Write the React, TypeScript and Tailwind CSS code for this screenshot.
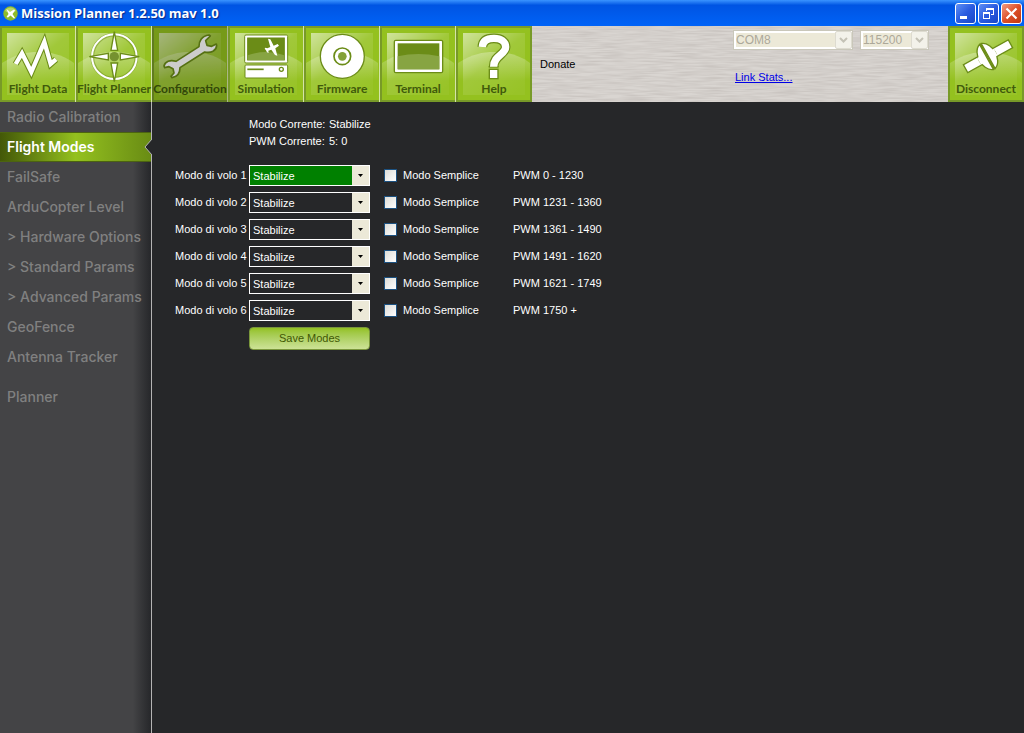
import { useState } from 'react'
import type { ReactNode } from 'react'

const OUTLINE = '#6b8c17'

function FlightDataIcon() {
  const points = '47,192 66,160 94,216 133,126 152,192 168,178'
  return (
    <g transform="translate(0 -26) scale(0.3333)" fill="none" strokeMiterlimit="8">
      <polyline points={points} stroke={OUTLINE} strokeWidth="19" />
      <polyline points={points} stroke="#fff" strokeWidth="13" />
    </g>
  )
}

function FlightPlannerIcon() {
  return (
    <g transform="translate(-76 -26) scale(0.3333)">
      <circle cx="343" cy="170" r="66" fill="none" stroke={OUTLINE} strokeWidth="11" opacity="0.5" />
      <circle cx="343" cy="170" r="67" fill="none" stroke="#fff" strokeWidth="6" />
      <g fill="#fff" stroke={OUTLINE} strokeWidth="4">
        <path d="M343 95l10 56h-20z" />
        <path d="M343 245l10-56h-20z" />
        <path d="M268 170l57-10v20z" />
        <path d="M418 170l-57-10v20z" />
      </g>
      <circle cx="343" cy="170" r="14" fill="#75912f" />
    </g>
  )
}

function ConfigurationIcon() {
  return (
    <g transform="translate(-2 -2) scale(0.3333)">
      <path
        d="M147 68C146 52 155 36 177 33L181 36L167 50L171 64L185 67L199 60L200 65C199 80 184 88 164 84L90 131C90 147 82 158 66 161L63 157L72 147L69 134L57 128L44 131L42 126C45 113 60 106 78 112Z"
        fill="#fff"
        stroke={OUTLINE}
        strokeWidth="5"
        strokeLinejoin="round"
      />
    </g>
  )
}

function SimulationIcon() {
  return (
    <g transform="translate(0 -2) scale(0.3333)" stroke={OUTLINE} strokeWidth="3">
      <rect x="50" y="33" width="129" height="84" rx="4" fill="#fff" />
      <rect x="59" y="42" width="110" height="66" fill="#6b8c17" />
      <path d="M59 94q55-20 110 0v14h-110z" fill="#87a442" stroke="none" />
      <path
        d="M120 44L127 46L137 65L149 60L153 65L142 73L148 95L141 93L130 77L121 80L122 87L117 85L114 79L110 74L112 71L118 73L127 69Z"
        fill="#fff"
        stroke="none"
      />
      <rect x="51" y="123" width="128" height="39" rx="3" fill="#fff" />
      <path d="M58 136h49" strokeWidth="5" />
      <circle cx="160" cy="136" r="6" fill="#fff" strokeWidth="4" />
    </g>
  )
}

function FirmwareIcon() {
  return (
    <g transform="translate(-76 -2) scale(0.3333)" stroke={OUTLINE} strokeWidth="4">
      <circle cx="343" cy="97" r="66" fill="#fff" />
      <circle cx="343" cy="97" r="25" fill="#fff" strokeWidth="5" />
      <circle cx="343" cy="97" r="13" fill="#83a137" stroke="none" />
    </g>
  )
}

function TerminalIcon() {
  return (
    <g transform="translate(0 -2) scale(0.3333)">
      <rect x="43" y="49" width="145" height="97" rx="4" fill="#fff" stroke={OUTLINE} strokeWidth="4" />
      <rect x="53" y="58" width="125" height="78" fill="#6b8c17" />
      <path d="M53 97q62-14 125 0v39h-125z" fill="#87a442" />
    </g>
  )
}

function HelpIcon() {
  const hook = 'M307 69C308 50 322 43 342 43C363 43 377 53 377 69C377 92 341 94 341 128'
  return (
    <g transform="translate(-76 -2) scale(0.3333)" fill="none">
      <path d={hook} stroke={OUTLINE} strokeWidth="29" />
      <rect x="326" y="134" width="30" height="32" fill={OUTLINE} />
      <path d="M326 126h30v5h-30z" fill={OUTLINE} />
      <path d={hook} stroke="#fff" strokeWidth="22" />
      <rect x="330" y="138" width="22" height="24" fill="#fff" />
    </g>
  )
}

function DisconnectIcon() {
  return (
    <g transform="translate(-228 -26) scale(0.3333)">
      <g transform="rotate(-29 803 169)" fill="#fff" stroke={OUTLINE} strokeWidth="4">
        <rect x="727" y="156" width="154" height="27" />
        <path d="M799 126c-17 6-24 27-24 43s7 37 24 43z" />
        <path d="M805 126c17 6 24 27 24 43s-7 37-24 43z" />
        <path d="M777 158v23M827 158v23" stroke="#fff" strokeWidth="7" />
        <path d="M802 125v88" strokeWidth="4" />
      </g>
    </g>
  )
}

type TileProps = {
  label: string
  icon: ReactNode
  active?: boolean
  last?: boolean
}

function ToolbarTile({ label, icon, active, last }: TileProps) {
  return (
    <button
      type="button"
      className="relative flex h-[76px] w-[76px] shrink-0 items-end justify-center overflow-hidden pb-[5px] font-['Lato',sans-serif] text-xs font-bold whitespace-nowrap text-[#405a0b]"
    >
      <svg viewBox="0 0 76 76" className="absolute inset-0 h-full w-full" aria-hidden="true">
        <rect width="76" height="76" fill="#789a28" />
        <rect x="2" y="2" width={last ? 72 : 73} height="72" fill="#94c11f" />
        <rect x="7" y="7" width="62" height="62" fill="url(#tile-shine)" />
        <path d="M2 37C16 28 27 26 38 26s24 2 36 11v37H2z" fill="url(#tile-hill)" />
        {!last && <rect x="75" width="1" height="76" fill="#d5e4a8" />}
        {icon}
      </svg>
      <span className="relative">{label}</span>
      {active && <span className="absolute inset-0 bg-black/20" />}
    </button>
  )
}

function TileGradients() {
  return (
    <svg className="absolute h-0 w-0" aria-hidden="true">
      <defs>
        <linearGradient id="tile-shine" x1="0" y1="0" x2="0.8" y2="1">
          <stop offset="0" stopColor="#fff" stopOpacity="0.56" />
          <stop offset="0.5" stopColor="#fff" stopOpacity="0.12" />
          <stop offset="1" stopColor="#fff" stopOpacity="0.04" />
        </linearGradient>
        <linearGradient id="tile-hill" x1="0" y1="0" x2="0" y2="1">
          <stop offset="0" stopColor="#fff" stopOpacity="0.3" />
          <stop offset="0.6" stopColor="#fff" stopOpacity="0" />
        </linearGradient>
      </defs>
    </svg>
  )
}

const tiles = [
  { label: 'Flight Data', icon: <FlightDataIcon /> },
  { label: 'Flight Planner', icon: <FlightPlannerIcon /> },
  { label: 'Configuration', icon: <ConfigurationIcon />, active: true },
  { label: 'Simulation', icon: <SimulationIcon /> },
  { label: 'Firmware', icon: <FirmwareIcon /> },
  { label: 'Terminal', icon: <TerminalIcon /> },
  { label: 'Help', icon: <HelpIcon />, last: true },
]

const windowButton = 'flex h-[21px] w-[21px] items-center justify-center rounded-[3px] border border-white'

function TitleBar() {
  return (
    <header className="flex h-[26px] items-center bg-linear-to-b from-[#3a93ff] via-[#0054e3] via-20% to-[#0063f7] pr-[2px] pl-[3px]">
      <svg width="15" height="15" viewBox="0 0 15 15" aria-hidden="true">
        <circle cx="7.5" cy="7.5" r="7.2" fill="#8dbb2a" />
        <path d="M2 5a6 6 0 0 1 11 0L7.500 8z" fill="#b7d56c" />
        <path d="M3.500 3l3.500 3 4-2.500 1 1-2.500 3.500 2.500 4-1 .5-3.500-3-2.500 2-1.500-.5 2-3z" fill="#fff" />
      </svg>
      <h1 className="ml-[3px] font-['Open_Sans',sans-serif] text-[13px] leading-5 font-bold text-white [text-shadow:1px_1px_1px_#0a2a8a]">
        Mission Planner 1.2.50 mav 1.0
      </h1>
      <div className="ml-auto flex gap-[2px]">
        <button
          type="button"
          aria-label="Minimize"
          className={`${windowButton} bg-linear-to-br from-[#5f8ff5] via-[#2a5be0] to-[#1846c8]`}
        >
          <svg width="19" height="19" aria-hidden="true">
            <rect x="4" y="12" width="7" height="3" fill="#fff" />
          </svg>
        </button>
        <button
          type="button"
          aria-label="Restore"
          className={`${windowButton} bg-linear-to-br from-[#5f8ff5] via-[#2a5be0] to-[#1846c8]`}
        >
          <svg width="19" height="19" aria-hidden="true" fill="none" stroke="#fff" shapeRendering="crispEdges">
            <path d="M7.500 7V4.500h7v6H12M7 5.500h8" />
            <path d="M4.500 8.500h6v6h-6zM4 9.500h7" />
          </svg>
        </button>
        <button
          type="button"
          aria-label="Close"
          className={`${windowButton} bg-linear-to-br from-[#f09a80] via-[#dd4f28] to-[#c03a10]`}
        >
          <svg width="19" height="19" aria-hidden="true">
            <path d="M4.500 4.500l10 10M14.500 4.500l-10 10" stroke="#fff" strokeWidth="2.200" />
          </svg>
        </button>
      </div>
    </header>
  )
}

function DisabledSelect({ label, value, width }: { label: string; value: string; width: string }) {
  return (
    <div className={`relative h-5 border border-[#c9c7ba] bg-white p-px ${width}`}>
      <select
        disabled
        aria-label={label}
        className="block h-full w-full appearance-none border border-white bg-[#ece9d8] text-xs leading-3 text-[#aca899] opacity-100"
      >
        <option>{value}</option>
      </select>
      <span className="pointer-events-none absolute inset-y-0 right-0 flex w-[17px] items-center justify-center rounded-xs border border-[#dddbd0] bg-[#f3f2ea]">
        <svg width="9" height="7" aria-hidden="true">
          <path d="M1 1l3.500 3.500L8 1" fill="none" stroke="#c4c2b6" strokeWidth="2" />
        </svg>
      </span>
    </div>
  )
}

function Toolbar() {
  return (
    <div className="relative flex h-[76px] bg-[#d9d5d1]">
      <svg className="absolute inset-0 h-full w-full" aria-hidden="true">
        <filter id="brushed" colorInterpolationFilters="sRGB">
          <feTurbulence type="fractalNoise" baseFrequency="0.04 0.6" numOctaves="2" />
          <feColorMatrix values="0 0 0 0 0.5  0 0 0 0 0.46  0 0 0 0 0.44  0.35 0 0 0 -0.11" />
        </filter>
        <rect width="100%" height="100%" filter="url(#brushed)" />
      </svg>
      <nav className="relative flex">
        {tiles.map((tile) => (
          <ToolbarTile key={tile.label} {...tile} />
        ))}
      </nav>
      <a href="#donate" className="relative mt-[30px] ml-2 self-start leading-4 text-black">
        Donate
      </a>
      <div className="relative mr-[19px] ml-auto">
        <div className="mt-1 flex gap-[7px]">
          <DisabledSelect label="Port" value="COM8" width="w-[120px]" />
          <DisabledSelect label="Baud rate" value="115200" width="w-[69px]" />
        </div>
        <a href="#link-stats" className="mt-[19px] ml-[2px] inline-block leading-4 text-[#0000e6] underline">
          Link Stats...
        </a>
      </div>
      <div className="relative">
        <ToolbarTile label="Disconnect" icon={<DisconnectIcon />} last />
      </div>
    </div>
  )
}

const menu = [
  'Radio Calibration',
  'Flight Modes',
  'FailSafe',
  'ArduCopter Level',
  '> Hardware Options',
  '> Standard Params',
  '> Advanced Params',
  'GeoFence',
  'Antenna Tracker',
  'Planner',
]

function Sidebar({ current, onSelect }: { current: string; onSelect: (item: string) => void }) {
  return (
    <aside className="w-[152px] shrink-0 border-r border-[#b4b4b4] bg-linear-to-r from-[#444446] from-88% to-[#26272a]">
      <ul>
        {menu.map((item) => (
          <li key={item} className="last:mt-[10px]">
            <button
              type="button"
              onClick={() => onSelect(item)}
              className={`relative flex h-[30px] w-full items-center pb-px pl-[7px] text-left font-['Inter',sans-serif] text-sm whitespace-nowrap ${
                item === current
                  ? 'border-y border-[#4c6410] bg-linear-to-r from-[#435808] via-[#94c11f] to-[#698c14] font-semibold text-white'
                  : 'font-medium text-[#808080]'
              }`}
            >
              {item}
              {item === current && (
                <svg width="8" height="16" className="absolute top-[6px] -right-px" aria-hidden="true">
                  <path d="M8 0L1 8l7 8" fill="#262729" stroke="#b4b4b4" />
                </svg>
              )}
            </button>
          </li>
        ))}
      </ul>
    </aside>
  )
}

const ranges = [
  'PWM 0 - 1230',
  'PWM 1231 - 1360',
  'PWM 1361 - 1490',
  'PWM 1491 - 1620',
  'PWM 1621 - 1749',
  'PWM 1750 +',
]

const modes = ['Stabilize', 'Acro', 'AltHold', 'Auto', 'Guided', 'Loiter', 'RTL', 'Circle', 'Land']

function ModeRow({ index, range }: { index: number; range: string }) {
  const id = `mode-${index}`
  return (
    <div className="flex h-[21px] items-center">
      <label htmlFor={id} className="w-[74px] shrink-0 whitespace-nowrap">
        Modo di volo {index}
      </label>
      <div className="relative h-full w-[121px] shrink-0">
        <select
          id={id}
          className={`block h-full w-full appearance-none border border-white pt-px pl-[3px] text-white ${
            index === 1 ? 'bg-[#008000]' : 'bg-[#262729]'
          }`}
        >
          {modes.map((mode) => (
            <option key={mode}>{mode}</option>
          ))}
        </select>
        <span className="pointer-events-none absolute inset-y-px right-px flex w-[17px] items-center justify-center bg-[#ece9d8]">
          <svg width="5" height="3" aria-hidden="true">
            <path d="M0 0h5L2.500 3z" fill="#000" />
          </svg>
        </span>
      </div>
      <label className="ml-[14px] flex w-[129px] shrink-0 items-center gap-[6px] whitespace-nowrap">
        <input
          type="checkbox"
          className="h-[13px] w-[13px] appearance-none border border-[#1c5180] bg-linear-to-br from-[#dcdcd7] to-white checked:bg-[#21a121]"
        />
        Modo Semplice
      </label>
      <span className="whitespace-nowrap">{range}</span>
    </div>
  )
}

function FlightModes() {
  return (
    <main className="min-w-0 flex-1 pt-[14px] pl-[23px] text-white">
      <dl className="grid grid-cols-[80px_1fr] pl-[74px] leading-[17px]">
        <dt>Modo Corrente:</dt>
        <dd>Stabilize</dd>
        <dt>PWM Corrente:</dt>
        <dd>5: 0</dd>
      </dl>
      <form className="mt-[15px] flex flex-col gap-[6px]" onSubmit={(e) => e.preventDefault()}>
        {ranges.map((range, i) => (
          <ModeRow key={range} index={i + 1} range={range} />
        ))}
        <button
          type="submit"
          className="ml-[74px] h-[23px] w-[121px] rounded-sm border border-[#79963a] bg-linear-to-b from-[#94c11f] to-[#cde296] text-[#405704]"
        >
          Save Modes
        </button>
      </form>
    </main>
  )
}

export default function App() {
  const [current, setCurrent] = useState('Flight Modes')

  return (
    <div className="flex min-h-screen flex-col bg-[#262729] font-['Liberation_Sans',sans-serif] text-[11px]">
      <TileGradients />
      <TitleBar />
      <Toolbar />
      <div className="flex flex-1">
        <Sidebar current={current} onSelect={setCurrent} />
        <FlightModes />
      </div>
    </div>
  )
}
